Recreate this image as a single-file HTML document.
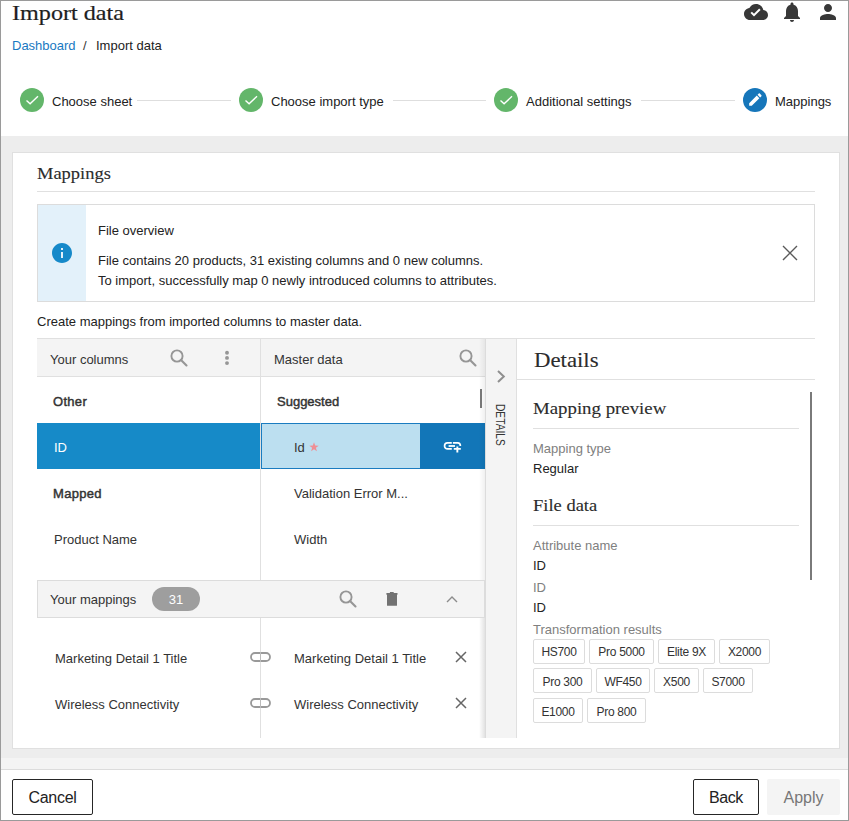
<!DOCTYPE html>
<html><head><meta charset="utf-8">
<style>
*{box-sizing:border-box;margin:0;padding:0}
html,body{width:849px;height:821px;overflow:hidden;background:#fff}
body{position:relative;font-family:"Liberation Sans",sans-serif;font-size:13px;color:#222}
.a{position:absolute}
.t{position:absolute;white-space:nowrap;line-height:1}
.serif{font-family:"Liberation Serif",serif}
.frame{left:0;top:0;width:849px;height:821px;border:1px solid #9a9a9a;z-index:50;pointer-events:none}
.stepc{width:24px;height:24px;border-radius:50%;}
.green{background:#63b66a}
.line{height:1px;background:#dedede}
.hl{height:1px;background:#e0e0e0}
.vl{width:1px;background:#e0e0e0}
.chip{position:absolute;height:25px;border:1px solid #dcdcdc;border-radius:2px;line-height:25px;text-align:center;color:#333;font-size:12px;letter-spacing:-0.3px;background:#fff}
</style></head><body>
<div class="a frame"></div>

<!-- header -->
<div class="t serif" style="left:12px;top:3px;font-size:21px;color:#1e1e1e;transform:scaleX(1.15);transform-origin:0 0;-webkit-text-stroke:0.2px #1e1e1e">Import data</div>
<div class="t" style="left:12px;top:39px;color:#1879c2">Dashboard</div>
<div class="t" style="left:83px;top:39px;color:#333">/</div>
<div class="t" style="left:96px;top:39px;color:#222">Import data</div>

<!-- top icons -->
<svg class="a" style="left:744px;top:0px" width="24" height="24" viewBox="0 0 24 24"><path fill="#383838" fill-rule="evenodd" d="M19.35 10.04C18.67 6.59 15.64 4 12 4 9.11 4 6.6 5.64 5.35 8.04 2.34 8.36 0 10.91 0 14c0 3.31 2.69 6 6 6h13c2.76 0 5-2.240 5-5 0-2.64-2.05-4.78-4.650-4.96zM10 16.6l-3.5-3.5 1.41-1.41L10 13.77 15.18 8.6l1.41 1.41L10 16.6z"/></svg>
<svg class="a" style="left:780px;top:0px" width="24" height="24" viewBox="0 0 24 24"><path fill="#383838" d="M12 22c1.1 0 2-.9 2-2h-4c0 1.1.89 2 2 2zm6-6v-5c0-3.070-1.64-5.64-4.5-6.32V4c0-.83-.67-1.5-1.5-1.5s-1.5.67-1.5 1.5v.68C7.63 5.36 6 7.92 6 11v5l-2 2v1h16v-1l-2-2z"/></svg>
<svg class="a" style="left:816px;top:0px" width="24" height="24" viewBox="0 0 24 24"><path fill="#383838" d="M12 12c2.21 0 4-1.79 4-4s-1.79-4-4-4-4 1.79-4 4 1.79 4 4 4zm0 2c-2.67 0-8 1.34-8 4v2h16v-2c0-2.66-5.33-4-8-4z"/></svg>

<!-- stepper -->
<div class="a stepc green" style="left:20px;top:88px"></div>
<svg class="a" style="left:20px;top:88px" width="24" height="24"><path d="M6.5 12.5 L10.1 15.8 L18 8.3" stroke="#fff" stroke-width="1.4" fill="none"/></svg>
<div class="t" style="left:52px;top:95px">Choose sheet</div>
<div class="a line" style="left:137px;top:100px;width:94px"></div>
<div class="a stepc green" style="left:239px;top:88px"></div>
<svg class="a" style="left:239px;top:88px" width="24" height="24"><path d="M6.5 12.5 L10.1 15.8 L18 8.3" stroke="#fff" stroke-width="1.4" fill="none"/></svg>
<div class="t" style="left:271px;top:95px">Choose import type</div>
<div class="a line" style="left:393px;top:100px;width:93px"></div>
<div class="a stepc green" style="left:494px;top:88px"></div>
<svg class="a" style="left:494px;top:88px" width="24" height="24"><path d="M6.5 12.5 L10.1 15.8 L18 8.3" stroke="#fff" stroke-width="1.4" fill="none"/></svg>
<div class="t" style="left:526px;top:95px">Additional settings</div>
<div class="a line" style="left:641px;top:100px;width:94px"></div>
<div class="a stepc" style="left:743px;top:88px;background:#1676ba"></div>
<svg class="a" style="left:743px;top:88px" width="24" height="24"><g transform="translate(4.1,3.3) scale(0.69)"><path d="M3 17.25V21h3.75L17.81 9.94l-3.75-3.75L3 17.25zM20.71 7.04c.39-.39.39-1.02 0-1.41l-2.34-2.34c-.39-.39-1.02-.39-1.41 0l-1.83 1.83 3.75 3.75 1.83-1.83z" fill="#fff"/></g></svg>
<div class="t" style="left:775px;top:95px">Mappings</div>

<!-- gray area -->
<div class="a" style="left:0;top:136px;width:849px;height:622px;background:#ededed"></div>
<div class="a" style="left:0;top:758px;width:849px;height:11px;background:#f4f4f4"></div>
<div class="a" style="left:0;top:769px;width:849px;height:1px;background:#dcdcdc"></div>

<!-- card -->
<div class="a" style="left:12px;top:152px;width:828px;height:597px;background:#fff;border:1px solid #e0e0e0"></div>
<div class="t serif" style="left:37px;top:165px;font-size:17.5px;color:#2c2c2c;transform:scaleX(1.055);transform-origin:0 0;-webkit-text-stroke:0.12px #2c2c2c">Mappings</div>
<div class="a hl" style="left:37px;top:191px;width:778px"></div>

<!-- info box -->
<div class="a" style="left:37px;top:204px;width:778px;height:98px;border:1px solid #dcdcdc"></div>
<div class="a" style="left:38px;top:205px;width:48px;height:96px;background:#e3f1fa"></div>
<svg class="a" style="left:50px;top:241px" width="24" height="24" viewBox="0 0 24 24"><path fill="#1689c9" d="M12 2C6.48 2 2 6.48 2 12s4.48 10 10 10 10-4.48 10-10S17.52 2 12 2zm1 15h-2v-6h2v6zm0-8h-2V7h2v2z"/></svg>
<div class="t" style="left:98px;top:224px">File overview</div>
<div class="t" style="left:98px;top:254px">File contains 20 products, 31 existing columns and 0 new columns.</div>
<div class="t" style="left:98px;top:274px">To import, successfully map 0 newly introduced columns to attributes.</div>
<svg class="a" style="left:782px;top:245px" width="16" height="16"><path d="M1 1 L15 15 M15 1 L1 15" stroke="#5a5a5a" stroke-width="1.4"/></svg>

<div class="t" style="left:37px;top:315px">Create mappings from imported columns to master data.</div>

<!-- table -->
<div class="a hl" style="left:37px;top:338px;width:778px"></div>
<div class="a" style="left:37px;top:339px;width:448px;height:37px;background:#f4f4f4"></div>
<div class="a hl" style="left:37px;top:376px;width:448px"></div>
<div class="a vl" style="left:260px;top:339px;height:241px"></div>
<div class="t" style="left:50px;top:353px;color:#333">Your columns</div>
<svg class="a" style="left:170px;top:349px" width="18" height="18"><circle cx="7" cy="7" r="5.6" stroke="#969696" stroke-width="1.9" fill="none"/><path d="M11 11 L16.5 16.5" stroke="#969696" stroke-width="2.1" stroke-linecap="round"/></svg>
<svg class="a" style="left:224px;top:350px" width="6" height="16"><circle cx="3" cy="2.7" r="1.95" fill="#969696"/><circle cx="3" cy="7.9" r="1.95" fill="#969696"/><circle cx="3" cy="13.1" r="1.95" fill="#969696"/></svg>
<div class="t" style="left:274px;top:353px;color:#333">Master data</div>
<svg class="a" style="left:459px;top:349px" width="18" height="18"><circle cx="7" cy="7" r="5.6" stroke="#969696" stroke-width="1.9" fill="none"/><path d="M11 11 L16.5 16.5" stroke="#969696" stroke-width="2.1" stroke-linecap="round"/></svg>

<div class="t" style="left:53px;top:395px;color:#333;-webkit-text-stroke:0.45px #333;letter-spacing:0.3px">Other</div>
<div class="a" style="left:37px;top:423px;width:223px;height:46px;background:#168ac8"></div>
<div class="t" style="left:54px;top:441px;color:#fff">ID</div>
<div class="t" style="left:53px;top:487px;color:#333;-webkit-text-stroke:0.45px #333;letter-spacing:0.3px">Mapped</div>
<div class="t" style="left:54px;top:533px;color:#333">Product Name</div>

<div class="t" style="left:277px;top:395px;color:#333;-webkit-text-stroke:0.45px #333">Suggested</div>
<div class="a" style="left:480px;top:389px;width:2px;height:19px;background:#7a7a7a"></div>
<div class="a" style="left:261px;top:423px;width:224px;height:46px;background:#bcdff0;border:1.5px solid #1a7cc0"></div>
<div class="a" style="left:420px;top:423px;width:65px;height:46px;background:#1276b8"></div>
<div class="t" style="left:294px;top:441px;color:#333">Id</div>
<svg class="a" style="left:309px;top:442px" width="10" height="10" viewBox="0 0 10 10"><path d="M5 0.3 L6.2 3.6 L9.7 3.7 L6.9 5.8 L7.9 9.3 L5 7.3 L2.1 9.3 L3.1 5.8 L0.3 3.7 L3.8 3.6 Z" fill="#ef8f95"/></svg>
<svg class="a" style="left:443px;top:441px" width="20" height="13" viewBox="0 0 20 13"><path d="M8.8 1.95 L4.55 1.95 A3 3 0 0 0 4.55 7.95 L8.8 7.95" stroke="#fff" stroke-width="1.7" fill="none"/><path d="M5.6 5 L12 5" stroke="#fff" stroke-width="1.8"/><path d="M9.9 1.95 L14.6 1.95 A3 3 0 0 1 17.4 4.9" stroke="#fff" stroke-width="1.7" fill="none"/><path d="M14.35 5.4 L14.35 11.6 M10.8 7.9 L17.8 7.9" stroke="#fff" stroke-width="1.9"/></svg>
<div class="t" style="left:294px;top:487px;color:#333">Validation Error M...</div>
<div class="t" style="left:294px;top:533px;color:#333">Width</div>

<!-- details tab -->
<div class="a" style="left:485px;top:339px;width:32px;height:399px;background:#f4f4f4;border-left:1px solid #dcdcdc;border-right:1px solid #e2e2e2"></div>
<div class="a" style="left:479px;top:339px;width:6px;height:399px;background:linear-gradient(to right,rgba(0,0,0,0),rgba(0,0,0,0.06))"></div>
<svg class="a" style="left:496px;top:370px" width="10" height="13"><path d="M2 1 L7.8 6.5 L2 12" stroke="#8f8f8f" stroke-width="2" fill="none"/></svg>
<div class="t" style="left:494px;top:404px;writing-mode:vertical-rl;font-size:12px;color:#333;transform:scaleY(0.85);transform-origin:0 0">DETAILS</div>

<!-- details panel -->
<div class="a vl" style="left:516px;top:339px;height:399px"></div>
<div class="t serif" style="left:534px;top:350px;font-size:21px;color:#2c2c2c;transform:scaleX(1.085);transform-origin:0 0;-webkit-text-stroke:0.12px #2c2c2c">Details</div>
<div class="a hl" style="left:517px;top:379px;width:298px"></div>
<div class="t serif" style="left:533px;top:400px;font-size:17.5px;color:#2c2c2c;transform:scaleX(1.075);transform-origin:0 0;-webkit-text-stroke:0.12px #2c2c2c">Mapping preview</div>
<div class="a hl" style="left:533px;top:428px;width:266px"></div>
<div class="t" style="left:533px;top:442px;color:#808080">Mapping type</div>
<div class="t" style="left:533px;top:462px;color:#222">Regular</div>
<div class="t serif" style="left:533px;top:497px;font-size:17.5px;color:#2c2c2c;transform:scaleX(1.057);transform-origin:0 0;-webkit-text-stroke:0.12px #2c2c2c">File data</div>
<div class="a hl" style="left:533px;top:525px;width:266px"></div>
<div class="t" style="left:533px;top:539px;color:#808080">Attribute name</div>
<div class="t" style="left:533px;top:559px;color:#222">ID</div>
<div class="t" style="left:533px;top:581px;color:#808080">ID</div>
<div class="t" style="left:533px;top:601px;color:#222">ID</div>
<div class="t" style="left:533px;top:623px;color:#808080">Transformation results</div>
<div class="a" style="left:810px;top:392px;width:2px;height:188px;background:#7a7a7a"></div>

<div class="chip" style="left:533px;top:639px;width:52px">HS700</div>
<div class="chip" style="left:589px;top:639px;width:65px">Pro 5000</div>
<div class="chip" style="left:658px;top:639px;width:57px">Elite 9X</div>
<div class="chip" style="left:719px;top:639px;width:51px">X2000</div>
<div class="chip" style="left:533px;top:668px;width:59px;line-height:26px">Pro 300</div>
<div class="chip" style="left:596px;top:668px;width:54px;line-height:26px">WF450</div>
<div class="chip" style="left:654px;top:668px;width:45px;line-height:26px">X500</div>
<div class="chip" style="left:703px;top:668px;width:50px;line-height:26px">S7000</div>
<div class="chip" style="left:533px;top:698px;width:50px;line-height:26px">E1000</div>
<div class="chip" style="left:587px;top:698px;width:59px;line-height:26px">Pro 800</div>

<!-- your mappings -->
<div class="a" style="left:37px;top:580px;width:448px;height:38px;background:#f4f4f4;border:1px solid #dcdcdc"></div>
<div class="t" style="left:50px;top:593px;color:#333">Your mappings</div>
<div class="a" style="left:152px;top:587px;width:48px;height:24px;border-radius:12px;background:#9e9e9e;color:#fff;text-align:center;line-height:26px">31</div>
<svg class="a" style="left:339px;top:590px" width="18" height="18"><circle cx="7" cy="7" r="5.6" stroke="#969696" stroke-width="1.9" fill="none"/><path d="M11 11 L16.5 16.5" stroke="#969696" stroke-width="2.1" stroke-linecap="round"/></svg>
<svg class="a" style="left:386px;top:591px" width="12" height="16"><path d="M3.9 1 H7.7 V2.1 H11.5 V3.7 H11 V14.2 Q11 14.7 10.5 14.7 H1.5 Q1 14.7 1 14.2 V3.7 H0.4 V2.1 H3.9 Z" fill="#727272"/></svg>
<svg class="a" style="left:446px;top:595px" width="12" height="8"><path d="M1 7 L6 2 L11 7" stroke="#8c8c8c" stroke-width="1.4" fill="none"/></svg>

<div class="a vl" style="left:260px;top:618px;height:120px"></div>
<div class="a" style="left:479px;top:618px;width:6px;height:120px;background:linear-gradient(to right,rgba(0,0,0,0),rgba(0,0,0,0.06))"></div>
<div class="t" style="left:55px;top:652px;color:#333">Marketing Detail 1 Title</div>
<svg class="a" style="left:250px;top:652px" width="22" height="11"><rect x="1" y="1" width="19" height="8" rx="4" stroke="#999" stroke-width="1.8" fill="#fff"/><path d="M10.5 0 L10.5 10" stroke="#bbb" stroke-width="1"/></svg>
<div class="t" style="left:294px;top:652px;color:#333">Marketing Detail 1 Title</div>
<svg class="a" style="left:455px;top:651px" width="12" height="12"><path d="M1 1 L11 11 M11 1 L1 11" stroke="#666" stroke-width="1.5"/></svg>
<div class="t" style="left:55px;top:698px;color:#333">Wireless Connectivity</div>
<svg class="a" style="left:250px;top:698px" width="22" height="11"><rect x="1" y="1" width="19" height="8" rx="4" stroke="#999" stroke-width="1.8" fill="#fff"/><path d="M10.5 0 L10.5 10" stroke="#bbb" stroke-width="1"/></svg>
<div class="t" style="left:294px;top:698px;color:#333">Wireless Connectivity</div>
<svg class="a" style="left:455px;top:697px" width="12" height="12"><path d="M1 1 L11 11 M11 1 L1 11" stroke="#666" stroke-width="1.5"/></svg>

<!-- footer -->
<div class="a" style="left:12px;top:779px;width:81px;height:36px;border:1px solid #262626;border-radius:2px;font-size:16px;line-height:36px;text-align:center;color:#222;letter-spacing:-0.3px">Cancel</div>
<div class="a" style="left:693px;top:779px;width:66px;height:36px;border:1px solid #262626;border-radius:2px;font-size:16px;line-height:36px;text-align:center;color:#222;letter-spacing:-0.4px">Back</div>
<div class="a" style="left:767px;top:779px;width:73px;height:36px;background:#f4f4f4;border-radius:2px;font-size:16px;line-height:38px;text-align:center;color:#777">Apply</div>
</body></html>
